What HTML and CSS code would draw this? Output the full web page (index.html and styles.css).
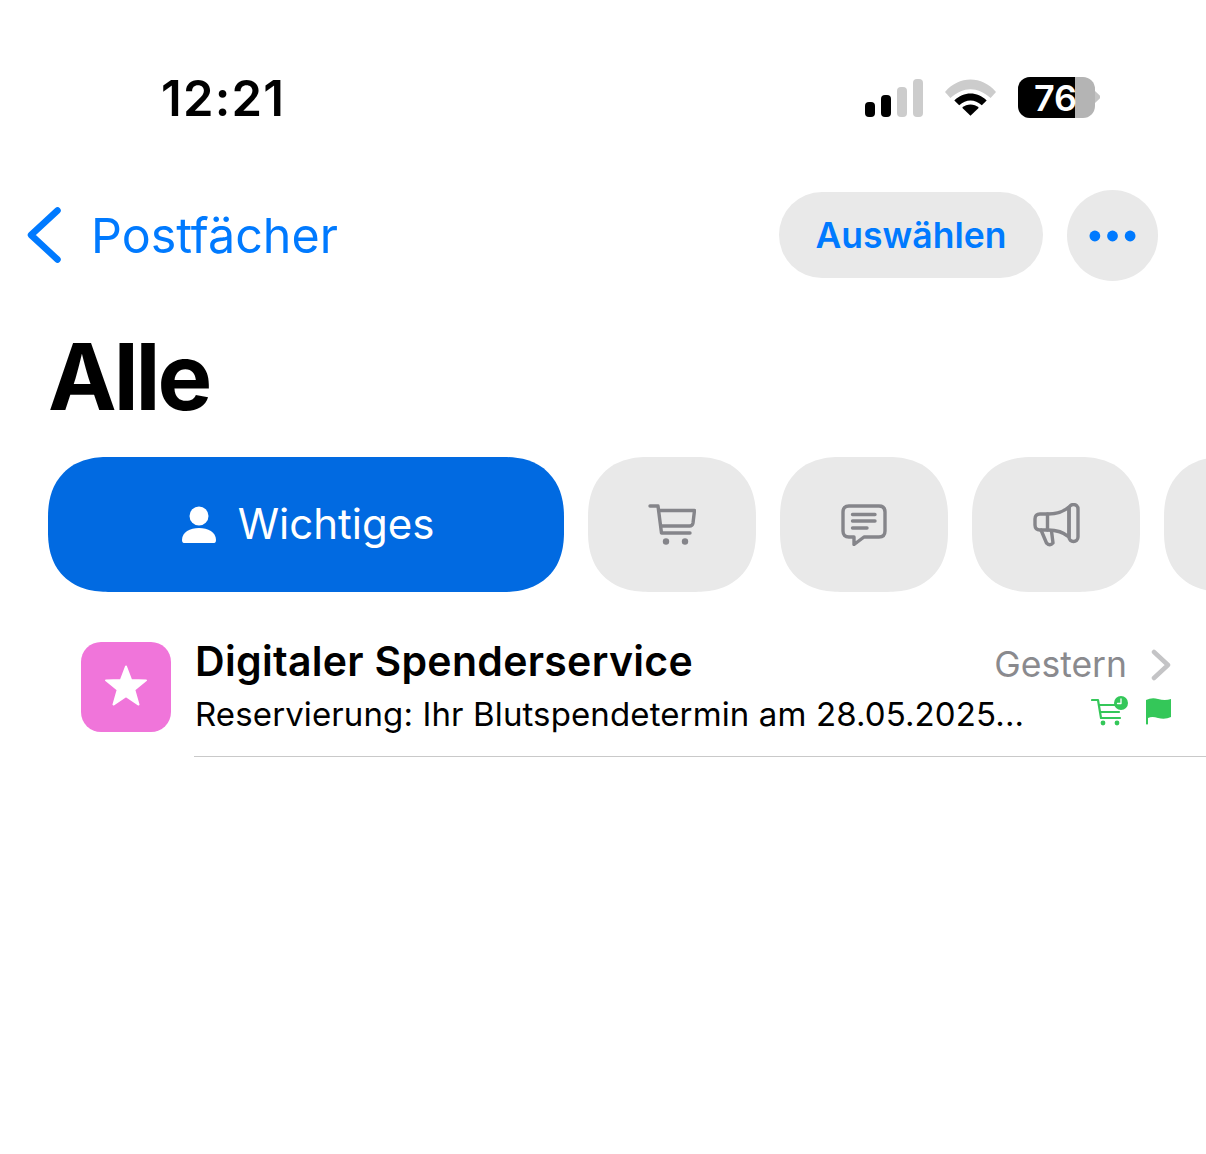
FILE: index.html
```html
<!DOCTYPE html>
<html lang="de">
<head>
    <meta charset="UTF-8">
    <title>Alle</title>
    <link rel="stylesheet" href="styles.css">
</head>
<body>

    <div class="statusbar">
        <div class="time">12:21</div>
        <div class="status-icons">
            <svg class="signal" width="58" height="38" viewBox="0 0 58 38">
                <rect x="0" y="23" width="10" height="15" rx="4" fill="#000"/>
                <rect x="16" y="16" width="10" height="22" rx="4" fill="#000"/>
                <rect x="32" y="8" width="10" height="30" rx="4" fill="#ccc"/>
                <rect x="48" y="0" width="10" height="38" rx="4" fill="#ccc"/>
            </svg>
            <svg class="wifi" width="51" height="38" viewBox="0 0 52 38">
                <path d="M0 13 C14 -4 38 -4 52 13 L46.500 19 C33 7 19 7 5.500 19 Z" fill="#ccc"/>
                <path d="M9.500 21.500 C19 12 33 12 42.500 21.500 L37.500 26.500 C30.500 20 21.500 20 14.500 26.500 Z" fill="#000"/>
                <path d="M17.500 29 C22.500 24.500 29.500 24.500 34.500 29 L26 37 Z" fill="#000"/>
            </svg>
            <div class="battery">
                <div class="battery-body">
                    <span class="battery-level"></span>
                    <span class="battery-text">76</span>
                </div>
                <span class="battery-tip"></span>
            </div>
        </div>
    </div>

    <div class="navbar">
        <div class="back">
            <svg width="34" height="56" viewBox="0 0 34 56">
                <path d="M30.500 3.500 L4 28 L30.500 52.500" fill="none" stroke="#007aff" stroke-width="6.500" stroke-linecap="round" stroke-linejoin="round"/>
            </svg>
            <span>Postfächer</span>
        </div>
        <div class="nav-actions">
            <button class="pill">Auswählen</button>
            <button class="more">
                <svg width="49" height="14" viewBox="0 0 50 14">
                    <circle cx="7" cy="7" r="5.500" fill="#007aff"/>
                    <circle cx="25" cy="7" r="5.500" fill="#007aff"/>
                    <circle cx="43" cy="7" r="5.500" fill="#007aff"/>
                </svg>
            </button>
        </div>
    </div>

    <h1>Alle</h1>

    <div class="tabs">
        <div class="tab active">
            <svg width="36" height="38" viewBox="0 0 36 38">
                <circle cx="18" cy="10" r="9.500" fill="#fff"/>
                <path d="M1 34 C1 26 9 22 18 22 C27 22 35 26 35 34 C35 36.500 34 37 32 37 L4 37 C2 37 1 36.500 1 34 Z" fill="#fff"/>
            </svg>
            <span>Wichtiges</span>
        </div>
        <div class="tab">
            <svg width="48" height="42" viewBox="0 0 48 42" fill="none" stroke="#85858a" stroke-width="3.400" stroke-linecap="round" stroke-linejoin="round">
                <path d="M2 2 L10 2 L13.500 29 L42 29"/>
                <path d="M11 6.500 L46.500 6.500 L45 19 Q44.500 22 41.500 22 L13 22"/>
                <circle cx="18" cy="37.500" r="3.200" fill="#85858a" stroke="none"/>
                <circle cx="37" cy="37.500" r="3.200" fill="#85858a" stroke="none"/>
            </svg>
        </div>
        <div class="tab">
            <svg width="46" height="42" viewBox="0 0 46 42" fill="none" stroke="#85858a" stroke-width="3.400" stroke-linecap="round" stroke-linejoin="round">
                <path d="M8 2 L38 2 Q44 2 44 8 L44 27 Q44 33 38 33 L23 33 L13 40.500 L13 33 L8 33 Q2 33 2 27 L2 8 Q2 2 8 2 Z"/>
                <path d="M11.500 10.500 L34 10.500 M11.500 17 L34 17 M11.500 24 L26 24"/>
            </svg>
        </div>
        <div class="tab">
            <svg width="47" height="44" viewBox="0 0 47 44" fill="none" stroke="#85858a" stroke-width="3.400" stroke-linecap="round" stroke-linejoin="round">
                <path d="M7 11 L15 11 Q28 11 36 4 L36 34 Q28 27 15 27 L7 27 Q2 27 2 22 L2 16 Q2 11 7 11 Z"/>
                <path d="M14.500 11 L14.500 27"/>
                <rect x="36" y="1.500" width="9" height="37" rx="4.500"/>
                <path d="M8 27 L13.500 40 Q17 43.500 20 40 L18.500 28"/>
            </svg>
        </div>
        <div class="tab"></div>
    </div>

    <div class="mail-row">
        <div class="avatar">
            <svg width="44" height="41" viewBox="0 0 46 44">
                <path d="M23 1.500 L28.500 16 L44.500 16.500 L32 26.500 L36.500 42.500 L23 33.500 L9.500 42.500 L14 26.500 L1.500 16.500 L17.500 16 Z" fill="#fff" stroke="#fff" stroke-width="2" stroke-linejoin="round"/>
            </svg>
        </div>
        <div class="mail-content">
            <div class="mail-top">
                <div class="sender">Digitaler Spenderservice</div>
                <div class="date">
                    <span>Gestern</span>
                    <svg width="20" height="32" viewBox="0 0 20 32">
                        <path d="M3 3 L17 16 L3 29" fill="none" stroke="#c4c4c6" stroke-width="4.500" stroke-linecap="round" stroke-linejoin="round"/>
                    </svg>
                </div>
            </div>
            <div class="mail-bottom">
                <div class="preview">Reservierung: Ihr Blutspendetermin am 28.05.2025...</div>
                <div class="mail-flags">
                    <svg width="38" height="30" viewBox="0 0 38 30" fill="none" stroke="#34c759" stroke-width="2.200" stroke-linecap="round" stroke-linejoin="round">
                        <path d="M1 4 L7 4 L10 22 L29 22"/>
                        <path d="M8 9 L24 9 M9 16 L28 16"/>
                        <circle cx="12" cy="27" r="2.400" fill="#34c759" stroke="none"/>
                        <circle cx="26" cy="27" r="2.400" fill="#34c759" stroke="none"/>
                        <circle cx="30" cy="7" r="7" fill="#34c759" stroke="none"/>
                        <path d="M30 3 L30 7.500 L26.500 7.500" stroke="#fff" stroke-width="1.300"/>
                    </svg>
                    <svg width="26" height="28" viewBox="0 0 26 28">
                        <path d="M1 3 Q7 0 13 2 Q20 4 26 2 L26 20 Q20 23 13 21 Q7 19 3 21 L3 27 Q2 28 1 27 Z" fill="#34c759"/>
                    </svg>
                </div>
            </div>
        </div>
    </div>

</body>
</html>
```

FILE: styles.css
```css
body {
    font-family: Inter, 'Liberation Sans', sans-serif;
    background-color: #fff;
    color: #000;
    margin: 0;
    width: 1206px;
    height: 1154px;
    overflow: hidden;
}

.statusbar {
    display: flex;
    justify-content: space-between;
    align-items: center;
    height: 76px;
    padding: 60px 106px 0 161px;
}

.time {
    font-size: 49px;
    font-weight: 600;
    letter-spacing: 1.200px;
}

.status-icons {
    display: flex;
    align-items: center;
    gap: 22px;
}

.battery {
    display: flex;
    align-items: center;
    margin-bottom: 2px;
}

.battery-body {
    position: relative;
    display: flex;
    align-items: center;
    justify-content: center;
    width: 77px;
    height: 41px;
    border-radius: 12px;
    background: #b4b4b4;
}

.battery-level {
    position: absolute;
    left: 0;
    top: 0;
    bottom: 0;
    width: 57px;
    border-radius: 12px 0 0 12px;
    background: #000;
}

.battery-text {
    position: relative;
    margin: 2px 2px 0 0;
    font-size: 36px;
    line-height: 36px;
    font-weight: 600;
    color: #fff;
}

.battery-tip {
    width: 5px;
    height: 12px;
    clip-path: polygon(0 0, 100% 40%, 100% 60%, 0 100%);
    background: #c4c4c4;
}

.navbar {
    display: flex;
    justify-content: space-between;
    align-items: center;
    height: 91px;
    margin-top: 54px;
    padding: 0 48px 0 27px;
}

.back {
    display: flex;
    align-items: center;
    gap: 30px;
    font-size: 48.400px;
    color: #007aff;
}

.back svg {
    margin-top: -2px;
}

.nav-actions {
    display: flex;
    align-items: center;
    gap: 24px;
}

.pill {
    width: 264px;
    height: 86px;
    margin-bottom: 1px;
    border: none;
    border-radius: 43px;
    background: #e9e9e9;
    color: #007aff;
    font-family: inherit;
    font-size: 35.500px;
    font-weight: 600;
    padding: 0;
}

.more {
    display: flex;
    align-items: center;
    justify-content: center;
    width: 91px;
    height: 91px;
    border: none;
    border-radius: 50%;
    background: #e9e9e9;
    padding: 0;
}

h1 {
    margin: 40px 0 0 48px;
    font-size: 92px;
    line-height: 112px;
    font-weight: 700;
    letter-spacing: -3px;
}

.tabs {
    display: flex;
    gap: 24px;
    margin-top: 24px;
    padding-left: 48px;
    overflow: hidden;
}

.tab {
    display: flex;
    align-items: center;
    justify-content: center;
    flex: none;
    box-sizing: border-box;
    width: 168px;
    height: 135px;
    border-radius: 60px;
    corner-shape: superellipse(1.2);
    background: #e9e9e9;
}

.tab.active {
    gap: 21px;
    width: 516px;
    padding-left: 3px;
    background: #016ae1;
    color: #fff;
    font-size: 42px;
}

.tab.active span {
    margin-top: -2px;
}

.mail-row {
    display: flex;
    gap: 23px;
    margin-top: 50px;
    padding-left: 81px;
}

.avatar {
    display: flex;
    align-items: center;
    justify-content: center;
    flex: none;
    width: 90px;
    height: 90px;
    border-radius: 20px;
    background: #f075da;
}

.avatar svg {
    margin-bottom: 3px;
}

.mail-content {
    flex: 1;
    height: 115px;
    margin-top: -1px;
    padding: 0 35px 0 1px;
    box-shadow: 0 1px 0 #c9c9c9;
}

.mail-top,
.mail-bottom {
    display: flex;
    justify-content: space-between;
    align-items: flex-start;
}

.sender {
    font-size: 41px;
    line-height: 40px;
    font-weight: 600;
    letter-spacing: 0.300px;
}

.date {
    display: flex;
    align-items: center;
    gap: 24px;
    margin-top: 3px;
    font-size: 35.500px;
    line-height: 42px;
    color: #8a8a8e;
}

.mail-bottom {
    margin-top: 9px;
}

.preview {
    font-size: 33px;
    line-height: 38px;
    letter-spacing: 0.120px;
}

.mail-flags {
    display: flex;
    align-items: center;
    gap: 16px;
    margin-top: 1px;
}
```
